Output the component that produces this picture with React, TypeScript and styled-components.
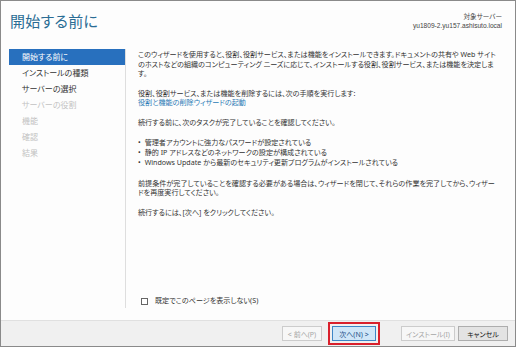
import styled, { createGlobalStyle } from "styled-components";

const GlobalStyle = createGlobalStyle`
  html, body {
    margin: 0;
    padding: 0;
    background: #ffffff;
  }
  * {
    box-sizing: border-box;
  }
`;

const FONT = `"Noto Sans", "Noto Sans CJK JP", sans-serif`;

export const Window = styled.div`
  width: 516px;
  height: 347px;
  border: 1px solid #8a8a8a;
  background: #fdfdfd;
  display: flex;
  flex-direction: column;
  font-family: ${FONT};
  font-feature-settings: "palt";
  color: #333333;
`;

export const Header = styled.div`
  height: 48px;
  display: flex;
  justify-content: space-between;
  align-items: flex-start;
  padding: 0 13px 0 9px;
`;

export const Title = styled.h1`
  margin: 9px 0 0;
  font-size: 15px;
  font-weight: 400;
  color: #2a6c94;
  letter-spacing: 0.3px;
`;

export const ServerInfo = styled.div`
  margin-top: 11px;
  text-align: right;
  font-family: "Liberation Sans", "Noto Sans CJK JP", sans-serif;
  font-size: 6.6px;
  line-height: 9px;
  color: #444444;
`;

export const Body = styled.div`
  flex: 1;
  display: flex;
  padding-bottom: 12px;
`;

export const Nav = styled.nav`
  width: 125px;
  padding-left: 8px;
  border-right: 1px solid #dedede;
  display: flex;
  flex-direction: column;
`;

export const NavItem = styled.div<{ $active?: boolean; $disabled?: boolean }>`
  height: 16px;
  line-height: 16px;
  padding-left: 13px;
  font-size: 8px;
  background: ${(p) => (p.$active ? "#2870be" : "transparent")};
  color: ${(p) => (p.$active ? "#ffffff" : p.$disabled ? "#c2c2c2" : "#333333")};
  white-space: nowrap;
`;

export const Content = styled.div`
  flex: 1;
  padding: 1px 6px 0 12px;
  display: flex;
  flex-direction: column;
  font-size: 7.1px;
  line-height: 9.5px;
`;

export const Para = styled.p`
  margin: 0 0 10px;
  white-space: nowrap;
`;

export const Link = styled.span`
  color: #2a7ab5;
`;

export const BulletList = styled.ul`
  margin: 0 0 11px;
  padding: 0;
  list-style: none;
  line-height: 10.2px;
`;

export const Bullet = styled.li`
  display: flex;
  gap: 4px;
  white-space: nowrap;

  &::before {
    content: "•";
  }
`;

export const CheckRow = styled.label`
  margin-top: auto;
  margin-bottom: 2px;
  display: flex;
  align-items: center;
  gap: 7px;
  padding-left: 3px;
  height: 10px;
`;

export const CheckBox = styled.span`
  width: 7px;
  height: 7px;
  border: 1px solid #666666;
  background: #ffffff;
`;

export const Footer = styled.div`
  height: 26px;
  background: #f0f0f0;
  border-top: 1px solid #e0e0e0;
  display: flex;
  justify-content: flex-end;
  align-items: center;
  padding-right: 7px;
`;

export const Button = styled.button<{ $variant?: "disabled" | "primary" | "normal" }>`
  height: 15px;
  padding: 0;
  font-family: ${FONT};
  font-feature-settings: "palt";
  font-size: 7px;
  border: 1px solid
    ${(p) => (p.$variant === "primary" ? "#3d86c6" : p.$variant === "disabled" ? "#cccccc" : "#adadad")};
  background: ${(p) => (p.$variant === "primary" ? "#cfe6f8" : p.$variant === "disabled" ? "#f7f7f7" : "#e3e3e3")};
  color: ${(p) => (p.$variant === "primary" ? "#1c4f86" : p.$variant === "disabled" ? "#a6a6a6" : "#111111")};
`;

export const Highlight = styled.div`
  padding: 2px;
  border: 2px solid #d9202c;
  display: flex;
  margin: 0 21px 0 6px;
`;

const steps = [
  { label: "開始する前に", active: true },
  { label: "インストールの種類" },
  { label: "サーバーの選択" },
  { label: "サーバーの役割", disabled: true },
  { label: "機能", disabled: true },
  { label: "確認", disabled: true },
  { label: "結果", disabled: true },
];

const App = () => {
  return (
    <>
      <GlobalStyle />
      <Window>
        <Header>
          <Title>開始する前に</Title>
          <ServerInfo>
            対象サーバー
            <br />
            yu1809-2.yu157.ashisuto.local
          </ServerInfo>
        </Header>
        <Body>
          <Nav>
            {steps.map((s) => (
              <NavItem key={s.label} $active={s.active} $disabled={s.disabled}>
                {s.label}
              </NavItem>
            ))}
          </Nav>
          <Content>
            <Para>
              このウィザードを使用すると、役割、役割サービス、または機能をインストールできます。ドキュメントの共有や Web サイト
              <br />
              のホストなどの組織のコンピューティング ニーズに応じて、インストールする役割、役割サービス、または機能を決定しま
              <br />
              す。
            </Para>
            <Para>
              役割、役割サービス、または機能を削除するには、次の手順を実行します:
              <br />
              <Link>役割と機能の削除ウィザードの起動</Link>
            </Para>
            <Para>続行する前に、次のタスクが完了していることを確認してください。</Para>
            <BulletList>
              <Bullet>管理者アカウントに強力なパスワードが設定されている</Bullet>
              <Bullet>静的 IP アドレスなどのネットワークの設定が構成されている</Bullet>
              <Bullet>Windows Update から最新のセキュリティ更新プログラムがインストールされている</Bullet>
            </BulletList>
            <Para>
              前提条件が完了していることを確認する必要がある場合は、ウィザードを閉じて、それらの作業を完了してから、ウィザー
              <br />
              ドを再度実行してください。
            </Para>
            <Para>続行するには、[次へ] をクリックしてください。</Para>
            <CheckRow>
              <CheckBox />
              既定でこのページを表示しない(S)
            </CheckRow>
          </Content>
        </Body>
        <Footer>
          <Button $variant="disabled" style={{ width: 40 }}>
            &lt; 前へ(P)
          </Button>
          <Highlight>
            <Button $variant="primary" style={{ width: 44 }}>
              次へ(N) &gt;
            </Button>
          </Highlight>
          <Button $variant="disabled" style={{ width: 54, marginRight: 3 }}>
            インストール(I)
          </Button>
          <Button $variant="normal" style={{ width: 50 }}>
            キャンセル
          </Button>
        </Footer>
      </Window>
    </>
  );
};

export default App;
